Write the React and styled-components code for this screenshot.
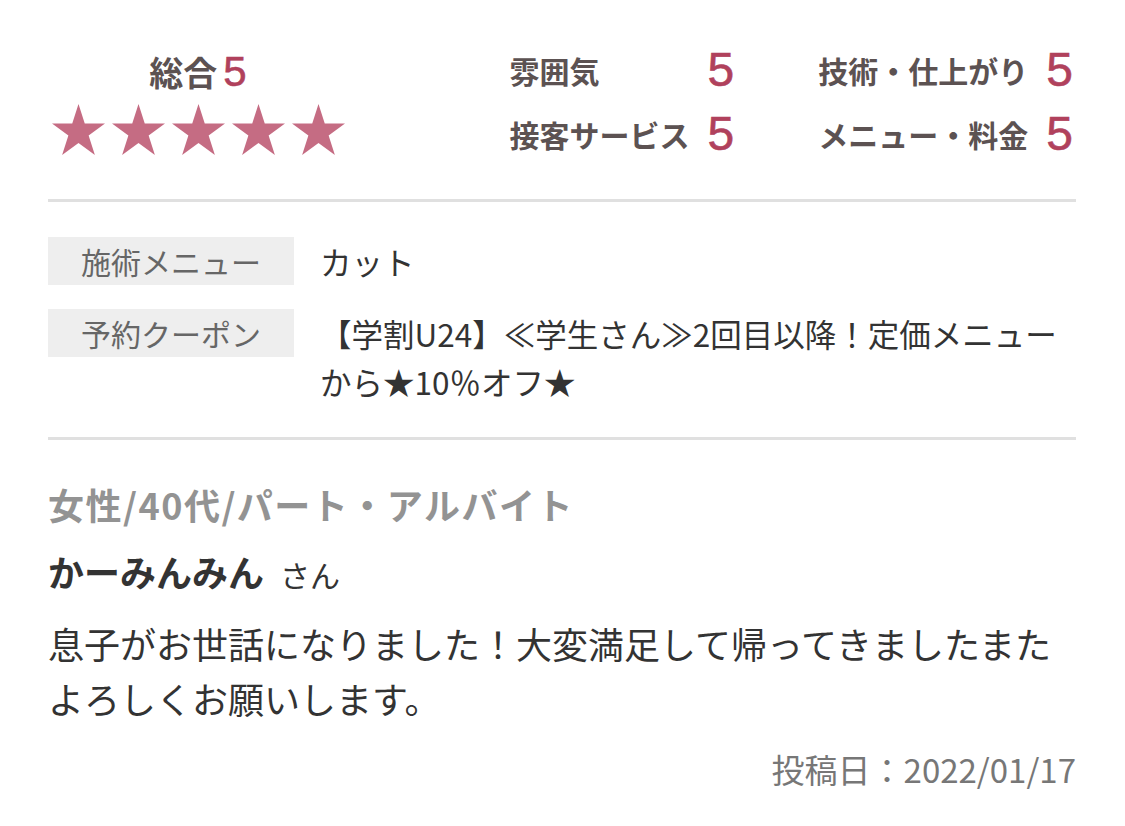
import React from "react";
import styled, { createGlobalStyle } from "styled-components";

const GlobalStyle = createGlobalStyle`
  html, body {
    margin: 0;
    padding: 0;
    background: #fff;
  }
  body {
    font-family: "Noto Sans CJK JP", "Noto Sans", sans-serif;
    color: #333;
  }
`;

const ratings = [
  { label: "雰囲気", value: 5 },
  { label: "技術・仕上がり", value: 5 },
  { label: "接客サービス", value: 5 },
  { label: "メニュー・料金", value: 5 },
];

const details = [
  { label: "施術メニュー", value: "カット" },
  {
    label: "予約クーポン",
    value: "【学割U24】≪学生さん≫2回目以降！定価メニューから★10％オフ★",
  },
];

function Star() {
  return (
    <StarIcon viewBox="0 0 100 95.1" preserveAspectRatio="none">
      <polygon points="50,0 61.8,36.33 100,36.33 69.1,58.77 80.9,95.1 50,72.65 19.1,95.1 30.9,58.77 0,36.33 38.2,36.33" />
    </StarIcon>
  );
}

export default function App() {
  return (
    <StyledReview>
      <GlobalStyle />
      <Summary>
        <Overall>
          <OverallTitle>
            総合<Score $size="42px" $lh="44px">5</Score>
          </OverallTitle>
          <Stars>
            {[0, 1, 2, 3, 4].map((i) => (
              <Star key={i} />
            ))}
          </Stars>
        </Overall>
        <RatingGrid>
          {ratings.map((r) => (
            <React.Fragment key={r.label}>
              <RatingLabel>{r.label}</RatingLabel>
              <Score $size="48px" $lh="64px">{r.value}</Score>
            </React.Fragment>
          ))}
        </RatingGrid>
      </Summary>

      <Details>
        {details.map((d) => (
          <DetailRow key={d.label}>
            <DetailLabel>{d.label}</DetailLabel>
            <DetailValue>{d.value}</DetailValue>
          </DetailRow>
        ))}
      </Details>

      <Body>
        <Attributes>女性/40代/パート・アルバイト</Attributes>
        <Reviewer>
          かーみんみん<Honorific>さん</Honorific>
        </Reviewer>
        <Comment>
          息子がお世話になりました！大変満足して帰ってきましたまたよろしくお願いします。
        </Comment>
        <PostDate>投稿日：2022/01/17</PostDate>
      </Body>
    </StyledReview>
  );
}

const StyledReview = styled.div`
  width: 100%;
  box-sizing: border-box;
  padding: 0 49px 0 48px;
`;

const Summary = styled.section`
  display: flex;
  justify-content: space-between;
  align-items: flex-start;
  padding: 38px 0 33px 0;
  border-bottom: 3px solid #e0e0e0;
`;

const Overall = styled.div`
  display: flex;
  flex-direction: column;
  align-items: center;
  margin-top: 12px;
  width: 300px;
`;

const OverallTitle = styled.div`
  display: flex;
  align-items: baseline;
  gap: 6px;
  height: 44px;
  font-size: 34px;
  line-height: 44px;
  font-weight: 700;
  color: #5c5252;
`;

const Score = styled.span`
  font-family: "Liberation Sans", "Noto Sans", sans-serif;
  font-size: ${(p) => p.$size};
  font-weight: 400;
  color: #b0415c;
  line-height: ${(p) => p.$lh};
  -webkit-text-stroke: 0.6px #b0415c;
`;

const Stars = styled.div`
  display: flex;
  gap: 7px;
  margin-top: 10px;
`;

const StarIcon = styled.svg`
  width: 53px;
  height: 51px;
  fill: #c56c83;
  display: block;
`;

const RatingGrid = styled.div`
  display: grid;
  grid-template-columns: auto auto auto auto;
  grid-auto-rows: 64px;
  align-items: center;
  column-gap: 18px;
  margin-right: 3px;

  & > span:nth-child(4n + 2) {
    margin-right: 66px;
  }
`;

const RatingLabel = styled.span`
  font-size: 30px;
  font-weight: 700;
  color: #5c5252;
  line-height: 64px;
`;

const Details = styled.section`
  display: flex;
  flex-direction: column;
  gap: 24px;
  padding: 35px 0 32px 0;
  border-bottom: 3px solid #e0e0e0;
`;

const DetailRow = styled.div`
  display: flex;
  align-items: flex-start;
  gap: 26px;
`;

const DetailLabel = styled.div`
  flex: 0 0 246px;
  height: 48px;
  line-height: 48px;
  text-align: center;
  background: #eeeeee;
  color: #666;
  font-size: 30px;
`;

const DetailValue = styled.div`
  flex: 1;
  font-size: 31.5px;
  line-height: 48px;
  color: #333;
`;

const Body = styled.section`
  display: flex;
  flex-direction: column;
  padding-top: 37px;
`;

const Attributes = styled.div`
  font-size: 36px;
  line-height: 54px;
  font-weight: 700;
  letter-spacing: 1.5px;
  color: #939393;
`;

const Reviewer = styled.div`
  margin-top: 13px;
  font-size: 36px;
  line-height: 54px;
  font-weight: 700;
  color: #333;
`;

const Honorific = styled.span`
  font-size: 30px;
  font-weight: 400;
  margin-left: 16px;
`;

const Comment = styled.p`
  margin: 15px 0 0 0;
  font-size: 36px;
  line-height: 55px;
  color: #333;
`;

const PostDate = styled.div`
  margin-top: 19px;
  text-align: right;
  font-size: 33px;
  line-height: 48px;
  color: #777;
`;
